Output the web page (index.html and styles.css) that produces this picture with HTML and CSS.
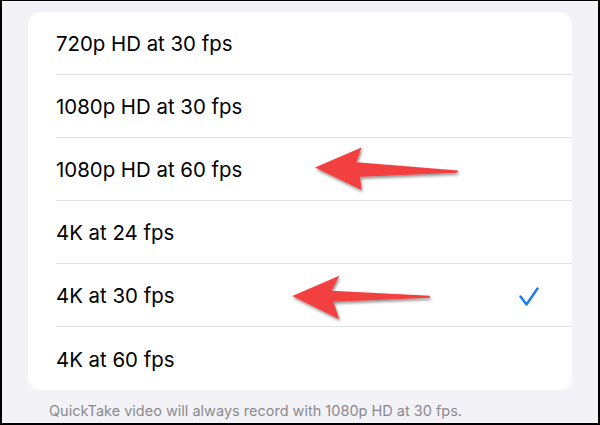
FILE: index.html
```html
<!DOCTYPE html>
<html>
<head>
<meta charset="utf-8">
<link rel="stylesheet" href="styles.css">
</head>
<body>
<div class="frame">
  <div class="card">
    <div class="row"><span>720p HD at 30 fps</span></div>
    <div class="row"><span>1080p HD at 30 fps</span></div>
    <div class="row"><span>1080p HD at 60 fps</span></div>
    <div class="row"><span>4K at 24 fps</span></div>
    <div class="row"><span>4K at 30 fps</span>
      <svg class="check" width="20" height="20" viewBox="0 0 20 20"><polyline points="1.5,9.5 7.5,17.5 18.5,1.5" fill="none" stroke="#1a7cf5" stroke-width="2.4" stroke-linecap="round" stroke-linejoin="round"/></svg>
    </div>
    <div class="row"><span>4K at 60 fps</span></div>
  </div>
  <p class="footer">QuickTake video will always record with 1080p HD at 30 fps.</p>
  <svg class="arrows" width="600" height="425" viewBox="0 0 600 425">
    <defs>
      <filter id="sh" x="-20%" y="-40%" width="140%" height="180%">
        <feDropShadow dx="1" dy="2" stdDeviation="1.5" flood-color="#000" flood-opacity="0.45"/>
      </filter>
    </defs>
    <polygon filter="url(#sh)" fill="#f2413f" points="315,167.5 361.5,147.5 356.5,162.3 458.3,170.5 457,172.8 360,176.8 361.5,190"/>
    <polygon filter="url(#sh)" fill="#f2413f" points="292.3,296 339.3,275.7 331.7,290.7 430,295.8 430,297.8 333.3,301.7 339.3,319.3"/>
  </svg>
</div>
</body>
</html>
```

FILE: styles.css
```css
html, body {
  margin: 0;
  padding: 0;
}
.frame {
  position: relative;
  width: 600px;
  height: 425px;
  box-sizing: border-box;
  border: 2px solid #000;
  border-top-width: 1px;
  background: #f2f2f7;
  overflow: hidden;
  font-family: Inter, "Liberation Sans", sans-serif;
}
.card {
  margin: 11px 26px 0 26px;
  background: #fff;
  border-radius: 12px;
  padding-left: 28px;
}
.row {
  height: 63px;
  display: flex;
  align-items: center;
  justify-content: space-between;
  border-bottom: 1px solid #e2e2e5;
  font-size: 20.4px;
  color: #000;
  padding-top: 1px;
  box-sizing: border-box;
}
.row:last-child {
  border-bottom: none;
}
.check {
  margin-right: 33px;
  margin-top: 2px;
}
.footer {
  margin: 12px 0 0 47px;
  font-size: 14.5px;
  color: #8a8a8e;
}
.arrows {
  position: absolute;
  left: -2px;
  top: -1px;
  pointer-events: none;
}
```
